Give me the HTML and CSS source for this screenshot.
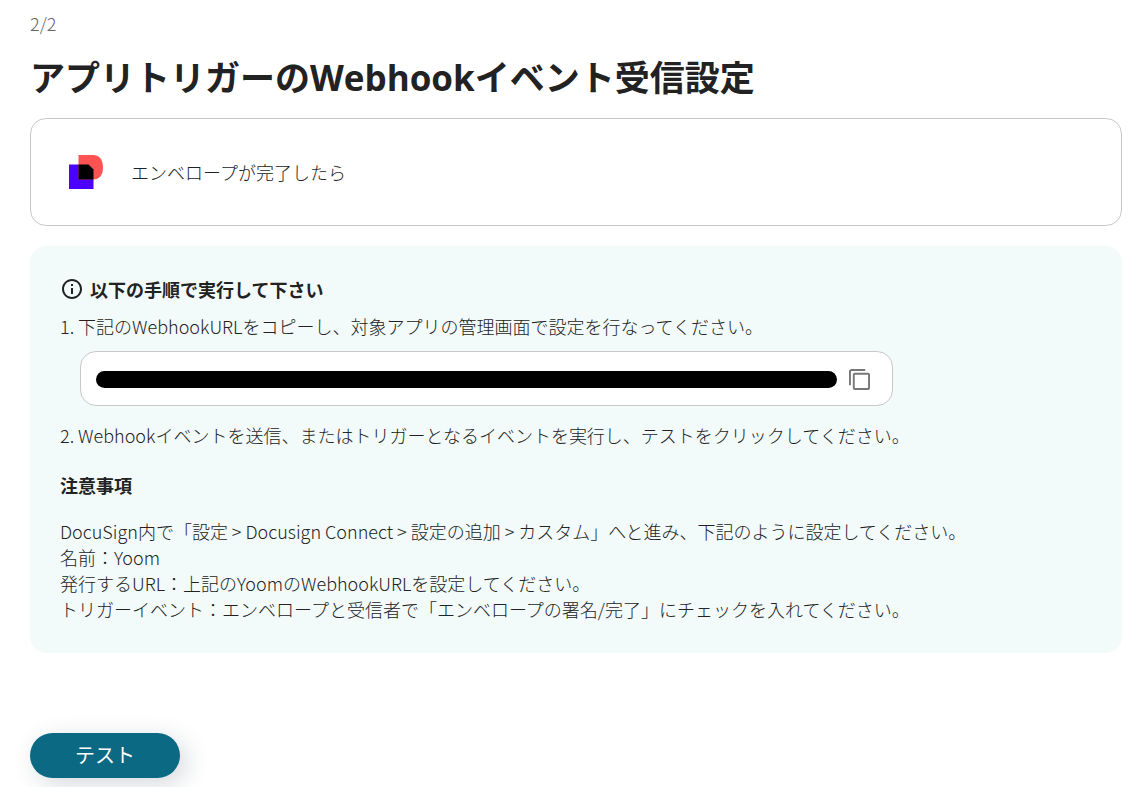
FILE: index.html
```
<!DOCTYPE html>
<html lang="ja">
<head>
    <meta charset="UTF-8">
    <meta name="viewport" content="width=device-width, initial-scale=1.0">
    <title>アプリトリガーのWebhookイベント受信設定</title>
    <link rel="stylesheet" href="styles.css">
</head>
<body>
    <main class="page">
        <p class="step">2/2</p>
        <h1>アプリトリガーのWebhookイベント受信設定</h1>

        <section class="trigger-card">
            <svg class="app-logo" viewBox="0 0 34 34" aria-hidden="true">
                <path fill="#4c00ff" d="M0 9.500h24.500V34H0z"/>
                <path fill="#ff5252" d="M9.500 0H24c6 0 10 4.500 10 12.500S30 24.500 24.500 24.500h-15z"/>
                <path fill="#000" d="M9.500 9.500h10l5 5v10h-15z"/>
            </svg>
            <span>エンベロープが完了したら</span>
        </section>

        <section class="guide">
            <h2 class="guide-title">
                <svg class="info-icon" viewBox="0 0 24 24" aria-hidden="true">
                    <path fill="currentColor" d="M11 7h2v2h-2zm0 4h2v6h-2zm1-9C6.480 2 2 6.480 2 12s4.480 10 10 10 10-4.480 10-10S17.520 2 12 2zm0 18c-4.410 0-8-3.590-8-8s3.590-8 8-8 8 3.590 8 8-3.590 8-8 8z"/>
                </svg>
                以下の手順で実行して下さい
            </h2>
            <p class="line">1. 下記のWebhookURLをコピーし、対象アプリの管理画面で設定を行なってください。</p>
            <div class="url-box">
                <input class="url-field" type="text" aria-label="WebhookURL" readonly>
                <button class="copy-button" type="button" aria-label="コピー">
                    <svg viewBox="0 0 22 22" aria-hidden="true">
                        <path d="M1 17V3q0-2 2-2h14" fill="none" stroke="currentColor" stroke-width="2"/>
                        <rect x="5" y="5" width="16" height="16" rx="1" fill="none" stroke="currentColor" stroke-width="2"/>
                    </svg>
                </button>
            </div>
            <p class="line">2. Webhookイベントを送信、またはトリガーとなるイベントを実行し、テストをクリックしてください。</p>
            <h3 class="notes-title">注意事項</h3>
            <p class="notes">
                DocuSign内で「設定 &gt; Docusign Connect &gt; 設定の追加 &gt; カスタム」へと進み、下記のように設定してください。<br>
                名前：Yoom<br>
                発行するURL：上記のYoomのWebhookURLを設定してください。<br>
                トリガーイベント：エンベロープと受信者で「エンベロープの署名/完了」にチェックを入れてください。
            </p>
        </section>

        <button class="test-button" type="button">テスト</button>
    </main>
</body>
</html>
```
FILE: styles.css
```
* {
    box-sizing: border-box;
}
html {
    overflow: hidden;
}
body {
    margin: 0;
    background-color: #fff;
    color: #222;
    font-family: "Noto Sans CJK JP", sans-serif;
    font-size: 18px;
    font-weight: 300;
    line-height: 26px;
}
h1, h2, h3, p {
    margin: 0;
}
.page {
    padding: 10px 16px 20px 30px;
}
.step {
    color: #666;
}
h1 {
    margin: 17px 0 16px;
    font-family: "Open Sans", "Noto Sans CJK JP", sans-serif;
    font-size: 35px;
    line-height: 49px;
}
.trigger-card {
    display: flex;
    align-items: center;
    gap: 28px;
    min-height: 108px;
    padding: 16px 38px;
    border: 1px solid #c8c8c8;
    border-radius: 16px;
}
.app-logo {
    width: 34px;
    height: 34px;
}
.guide {
    margin-top: 20px;
    padding: 30px 30px 31px;
    border-radius: 16px;
    background-color: #f2fbfa;
}
.guide-title {
    display: flex;
    align-items: center;
    gap: 6px;
    margin-bottom: 11px;
    font-size: 18px;
}
.info-icon {
    width: 24px;
    height: 24px;
}
.url-box {
    display: flex;
    align-items: center;
    gap: 12px;
    width: 100%;
    max-width: 813px;
    height: 55px;
    margin: 12px 0 16px 20px;
    padding: 2px 22px 0 15px;
    border: 1px solid #c8c8c8;
    border-radius: 16px;
    background-color: #fff;
}
.url-field {
    flex: 1;
    min-width: 0;
    height: 17px;
    border: none;
    border-radius: 9px;
    background-color: #000;
    color: #000;
}
.copy-button {
    width: 21px;
    height: 21px;
    padding: 0;
    border: none;
    background: none;
    color: #777;
    cursor: pointer;
}
.copy-button svg {
    display: block;
}
.notes-title {
    margin: 24px 0 20px;
    font-size: 18px;
}
.test-button {
    display: block;
    width: 150px;
    height: 45px;
    margin-top: 80px;
    padding-bottom: 4px;
    border: none;
    border-radius: 23px;
    background-color: #0b6983;
    color: #fff;
    font-family: inherit;
    font-size: 20px;
    font-weight: 400;
    box-shadow: 6px 6px 24px rgba(40, 60, 80, 0.2);
    cursor: pointer;
}
```
